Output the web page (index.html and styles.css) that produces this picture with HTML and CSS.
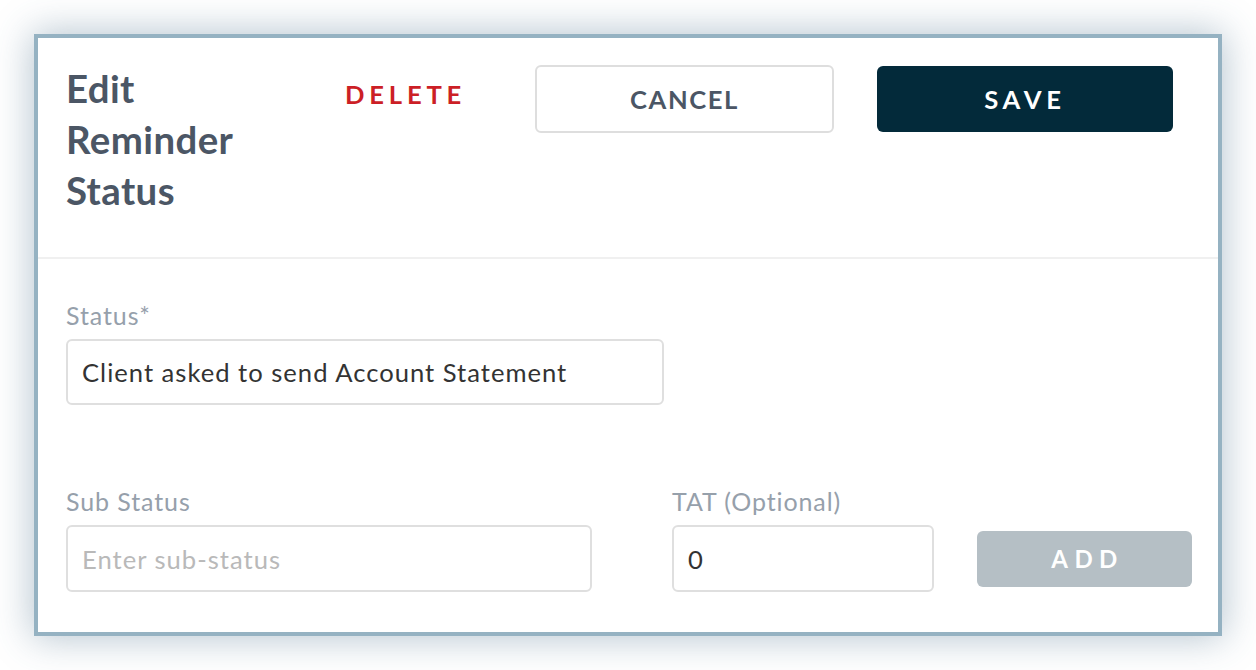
FILE: index.html
```html
<!DOCTYPE html>
<html lang="en">
<head>
<meta charset="utf-8">
<title>Edit Reminder Status</title>
<link rel="stylesheet" href="styles.css">
</head>
<body>
<div class="card">
  <div class="header">
    <h1 class="title">Edit Reminder Status</h1>
    <button class="btn btn-delete" type="button">DELETE</button>
    <button class="btn btn-cancel" type="button">CANCEL</button>
    <button class="btn btn-save" type="button">SAVE</button>
  </div>
  <div class="content">
    <div class="field field-status">
      <label class="label" for="status">Status*</label>
      <input class="input input-status" id="status" type="text" value="Client asked to send Account Statement">
    </div>
    <div class="row">
      <div class="field field-sub">
        <label class="label" for="sub">Sub Status</label>
        <input class="input input-sub" id="sub" type="text" placeholder="Enter sub-status">
      </div>
      <div class="field field-tat">
        <label class="label" for="tat">TAT (Optional)</label>
        <input class="input input-tat" id="tat" type="text" value="0">
      </div>
      <button class="btn btn-add" type="button">ADD</button>
    </div>
  </div>
</div>
</body>
</html>
```

FILE: styles.css
```css
* {
  box-sizing: border-box;
}

html, body {
  margin: 0;
  padding: 0;
  background: #ffffff;
}

body {
  font-family: Lato, "Open Sans", "Liberation Sans", sans-serif;
  padding: 34px;
}

.card {
  height: 602px;
  border: 4px solid #95b2c2;
  background: #ffffff;
  box-shadow: 0 0 36px 2px rgba(60, 100, 130, 0.38);
}

.header {
  display: flex;
  align-items: flex-start;
  height: 221px;
  padding: 24.6px 45px 0 28px;
  border-bottom: 2px solid #f0f0f0;
}

.title {
  margin: 0 79px 0 0;
  width: 200px;
  font-size: 38.4px;
  line-height: 51.2px;
  font-weight: 700;
  letter-spacing: 0.4px;
  color: #4b5665;
}

.btn {
  font-family: Lato, "Open Sans", "Liberation Sans", sans-serif;
  font-weight: 700;
  cursor: pointer;
  padding: 0;
}

.btn-delete {
  width: 190px;
  margin-top: 16.4px;
  text-align: left;
  background: none;
  border: none;
  font-size: 25.6px;
  line-height: 1.2;
  letter-spacing: 4.8px;
  color: #cc1f26;
}

.btn-cancel {
  width: 299px;
  height: 68px;
  margin-top: 2.4px;
  background: #ffffff;
  border: 2px solid #dedede;
  border-radius: 6px;
  font-size: 25.6px;
  line-height: 1.2;
  letter-spacing: 1.6px;
  color: #4b5665;
}

.btn-save {
  width: 296px;
  height: 66px;
  margin: 3.4px 0 0 43px;
  background: #032a3a;
  border: none;
  border-radius: 6px;
  font-size: 25.6px;
  line-height: 1.2;
  letter-spacing: 4.8px;
  color: #ffffff;
}

.content {
  padding: 43px 26px 0 28px;
}

.field {
  display: flex;
  flex-direction: column;
}

.label {
  font-size: 25px;
  line-height: 27px;
  letter-spacing: 0.9px;
  margin-bottom: 10px;
  color: #96a0ab;
}

.input {
  height: 66px;
  padding: 0 14px;
  border: 2px solid #dfdfdf;
  border-radius: 6px;
  background: #ffffff;
  font-family: Lato, "Open Sans", "Liberation Sans", sans-serif;
  font-size: 25.6px;
  letter-spacing: 1px;
  color: #333333;
  outline: none;
}

.input::placeholder {
  color: #b9b9b9;
}

.input-status {
  width: 598px;
}

.row {
  display: flex;
  align-items: flex-end;
  margin-top: 83px;
}

.input-sub {
  width: 526px;
  height: 67px;
}

.field-tat {
  margin-left: 80px;
}

.input-tat {
  width: 262px;
  height: 67px;
}

.btn-add {
  width: 215px;
  height: 56px;
  margin: 0 0 5px 43px;
  padding-left: 6px;
  background: #b5bfc5;
  border: none;
  border-radius: 6px;
  font-size: 24px;
  line-height: 1.2;
  letter-spacing: 6.4px;
  color: #ffffff;
}
```
